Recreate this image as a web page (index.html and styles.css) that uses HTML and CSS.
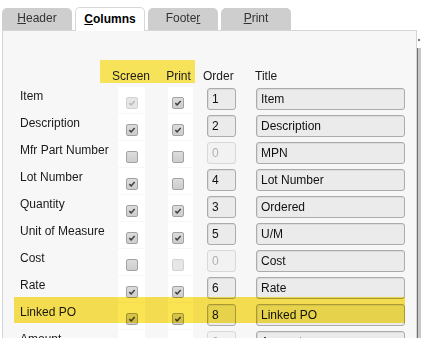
FILE: index.html
```html
<!DOCTYPE html>
<html lang="en">
<head>
  <meta charset="UTF-8">
  <title>Columns</title>
  <link rel="stylesheet" href="styles.css">
</head>
<body>

<div class="window">
  <div class="main">
    <div class="tabs">
      <div class="tab"><u>H</u>eader</div>
      <div class="tab active"><u>C</u>olumns</div>
      <div class="tab">Foote<u>r</u></div>
      <div class="tab"><u>P</u>rint</div>
    </div>

    <div class="panel">
      <div class="col-head">
        <div class="head-spacer"></div>
        <div class="head-pick">
          <span class="head-screen">Screen</span>
          <span class="head-print">Print</span>
        </div>
        <div class="head-order">Order</div>
        <div class="head-title">Title</div>
      </div>

      <div class="rows">
        <div class="row">
          <div class="row-label">Item</div>
          <div class="cell"><span class="box checked off"><svg viewBox="0 0 12 12"><path d="M2.8 6.2 L5 8.3 L9.2 3.6"/></svg></span></div>
          <div class="cell print"><span class="box checked"><svg viewBox="0 0 12 12"><path d="M2.8 6.2 L5 8.3 L9.2 3.6"/></svg></span></div>
          <input class="field order" value="1" readonly>
          <input class="field title" value="Item" readonly>
        </div>
        <div class="row">
          <div class="row-label">Description</div>
          <div class="cell"><span class="box checked"><svg viewBox="0 0 12 12"><path d="M2.8 6.2 L5 8.3 L9.2 3.6"/></svg></span></div>
          <div class="cell print"><span class="box checked"><svg viewBox="0 0 12 12"><path d="M2.8 6.2 L5 8.3 L9.2 3.6"/></svg></span></div>
          <input class="field order" value="2" readonly>
          <input class="field title" value="Description" readonly>
        </div>
        <div class="row">
          <div class="row-label">Mfr Part Number</div>
          <div class="cell"><span class="box"></span></div>
          <div class="cell print"><span class="box"></span></div>
          <input class="field order" value="0" disabled>
          <input class="field title" value="MPN" readonly>
        </div>
        <div class="row">
          <div class="row-label">Lot Number</div>
          <div class="cell"><span class="box checked"><svg viewBox="0 0 12 12"><path d="M2.8 6.2 L5 8.3 L9.2 3.6"/></svg></span></div>
          <div class="cell print"><span class="box"></span></div>
          <input class="field order" value="4" readonly>
          <input class="field title" value="Lot Number" readonly>
        </div>
        <div class="row">
          <div class="row-label">Quantity</div>
          <div class="cell"><span class="box checked"><svg viewBox="0 0 12 12"><path d="M2.8 6.2 L5 8.3 L9.2 3.6"/></svg></span></div>
          <div class="cell print"><span class="box checked"><svg viewBox="0 0 12 12"><path d="M2.8 6.2 L5 8.3 L9.2 3.6"/></svg></span></div>
          <input class="field order" value="3" readonly>
          <input class="field title" value="Ordered" readonly>
        </div>
        <div class="row">
          <div class="row-label">Unit of Measure</div>
          <div class="cell"><span class="box checked"><svg viewBox="0 0 12 12"><path d="M2.8 6.2 L5 8.3 L9.2 3.6"/></svg></span></div>
          <div class="cell print"><span class="box checked"><svg viewBox="0 0 12 12"><path d="M2.8 6.2 L5 8.3 L9.2 3.6"/></svg></span></div>
          <input class="field order" value="5" readonly>
          <input class="field title" value="U/M" readonly>
        </div>
        <div class="row">
          <div class="row-label">Cost</div>
          <div class="cell"><span class="box"></span></div>
          <div class="cell print"><span class="box off"></span></div>
          <input class="field order" value="0" disabled>
          <input class="field title" value="Cost" readonly>
        </div>
        <div class="row">
          <div class="row-label">Rate</div>
          <div class="cell"><span class="box checked"><svg viewBox="0 0 12 12"><path d="M2.8 6.2 L5 8.3 L9.2 3.6"/></svg></span></div>
          <div class="cell print"><span class="box checked"><svg viewBox="0 0 12 12"><path d="M2.8 6.2 L5 8.3 L9.2 3.6"/></svg></span></div>
          <input class="field order" value="6" readonly>
          <input class="field title" value="Rate" readonly>
        </div>
        <div class="row marked">
          <div class="row-label">Linked PO</div>
          <div class="cell"><span class="box checked"><svg viewBox="0 0 12 12"><path d="M2.8 6.2 L5 8.3 L9.2 3.6"/></svg></span></div>
          <div class="cell print"><span class="box checked"><svg viewBox="0 0 12 12"><path d="M2.8 6.2 L5 8.3 L9.2 3.6"/></svg></span></div>
          <input class="field order" value="8" readonly>
          <input class="field title" value="Linked PO" readonly>
        </div>
        <div class="row">
          <div class="row-label">Amount</div>
          <div class="cell"><span class="box"></span></div>
          <div class="cell print"><span class="box"></span></div>
          <input class="field order" value="0" disabled>
          <input class="field title" value="Amount" readonly>
        </div>
      </div>
    </div>
  </div>

  <div class="scrollbar">
    <span class="scroll-tip"></span>
    <span class="scroll-track"></span>
  </div>
</div>

</body>
</html>
```

FILE: styles.css
```css
body {
  margin: 0;
  background-color: #fff;
  font-family: "Liberation Sans", Arial, sans-serif;
  font-size: 12px;
  color: #1a1a1a;
  overflow: hidden;
}

.window {
  display: flex;
  height: 338px;
  overflow: hidden;
}

.main {
  width: 415px;
  margin-left: 2px;
  display: flex;
  flex-direction: column;
}

/* Tabs */
.tabs {
  display: flex;
  flex-shrink: 0;
  align-items: flex-end;
  gap: 3px;
  height: 30px;
}

.tab {
  box-sizing: border-box;
  width: 70px;
  height: 22px;
  padding-top: 3px;
  line-height: 14px;
  text-align: center;
  background-color: #cecece;
  border-radius: 5px 5px 0 0;
  color: #333;
}

.tab u {
  text-decoration-thickness: 1px;
}

.tab.active {
  height: 24px;
  margin-bottom: -1px;
  padding-top: 4px;
  background-color: #fff;
  border: 1px solid #d8d8d8;
  border-bottom: none;
  font-weight: bold;
  color: #000;
  position: relative;
  z-index: 1;
}

/* Panel */
.panel {
  flex: 1;
  min-height: 0;
  overflow: hidden;
  background-color: #f7f7f7;
  border: 1px solid #d6d6d6;
  border-bottom: none;
}

.col-head {
  display: flex;
  height: 23px;
  margin-top: 29px;
  padding-left: 17px;
  line-height: 14px;
}

.head-spacer {
  width: 80px;
}

.head-pick {
  box-sizing: border-box;
  display: flex;
  width: 95px;
  padding-top: 9px;
  background-color: #f7e35a;
}

.head-screen {
  width: 62px;
  text-align: center;
}

.head-print {
  width: 33px;
  text-align: center;
}

.head-order {
  width: 52px;
  margin-left: 8px;
  padding-top: 9px;
}

.head-title {
  padding-top: 9px;
}

.rows {
  margin-top: 4px;
}

.row {
  display: flex;
  height: 26px;
  margin-bottom: 1px;
  padding-left: 17px;
  position: relative;
}

.row-label {
  width: 98px;
  padding-top: 2px;
  line-height: 14px;
  white-space: nowrap;
}

.cell {
  box-sizing: border-box;
  width: 27px;
  padding: 10px 0 0 8px;
  background-color: #fff;
}

.cell.print {
  width: 25px;
  margin-left: 23px;
  padding-left: 4px;
}

/* Checkboxes */
.box {
  box-sizing: border-box;
  display: block;
  width: 12px;
  height: 12px;
  border: 1px solid #a2a2a2;
  border-radius: 2px;
  background: linear-gradient(#dcdcdc, #cdcdcd);
}

.box svg {
  display: block;
  width: 10px;
  height: 10px;
}

.box path {
  fill: none;
  stroke: #404040;
  stroke-width: 1.8;
}

.box.off {
  border-color: #d2d2d2;
  background: #e6e6e6;
}

.box.off path {
  stroke: #b8b8b8;
}

/* Text fields */
.field {
  box-sizing: border-box;
  height: 22px;
  margin: 1px 0 0 0;
  padding: 0 4px;
  border: 1px solid #ababab;
  border-radius: 3px;
  background-color: #ebebeb;
  box-shadow: inset 1px 1px 0 #dcdcdc;
  font-family: inherit;
  font-size: 12px;
  color: #111;
  outline: none;
}

.field:disabled {
  border-color: #d8d8d8;
  background-color: #f2f2f2;
  box-shadow: none;
  color: #b0b0b0;
}

.order {
  width: 29px;
  margin-left: 14px;
}

.title {
  width: 149px;
  margin-left: 20px;
}

/* Highlighted row */
.row.marked::after {
  content: '';
  position: absolute;
  left: 11px;
  top: -6px;
  width: 391px;
  height: 26px;
  background-color: #fbe452;
  mix-blend-mode: multiply;
}

/* Scrollbar edge */
.scrollbar {
  display: flex;
  flex-direction: column;
  align-items: flex-end;
  width: 4px;
  padding-top: 39px;
}

.scroll-tip {
  width: 2px;
  height: 2px;
  margin-right: 1px;
  background-color: #777;
}

.scroll-track {
  flex: 1;
  width: 3px;
  margin-top: 7px;
  border-left: 1px solid #6f6f6f;
  background-color: #c8c8c8;
}
```
